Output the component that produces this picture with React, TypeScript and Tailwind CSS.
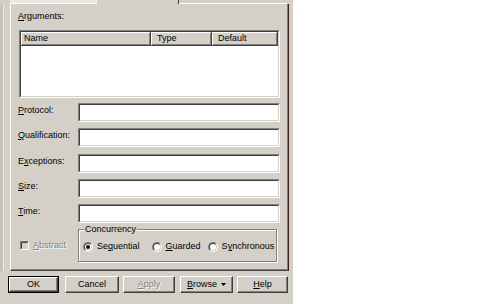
import type { ReactNode } from "react";

// sunken 3d frame (text fields, list, check box)
function Sunken({ className, inner, children }: { className: string; inner?: string; children?: ReactNode }) {
  return (
    <div className={`border border-t-[#808080] border-l-[#808080] border-r-white border-b-white ${className}`}>
      <div className={`h-full border border-t-[#404040] border-l-[#404040] border-r-[#d4d0c8] border-b-[#d4d0c8] ${inner ?? "bg-white"}`}>
        {children}
      </div>
    </div>
  );
}

function Radio({ on }: { on?: boolean }) {
  return (
    <div className="w-[10px] h-[10px] shrink-0 rounded-full border border-t-[#808080] border-l-[#808080] border-r-white border-b-white">
      <div className="w-full h-full rounded-full border border-t-[#404040] border-l-[#404040] border-r-[#d4d0c8] border-b-[#d4d0c8] bg-white flex items-center justify-center">
        {on && <div className="w-[4px] h-[4px] rounded-full bg-black" />}
      </div>
    </div>
  );
}

function Btn({ className, children, def }: { className: string; children: ReactNode; def?: boolean }) {
  const face =
    "h-full flex items-center justify-center border border-t-white border-l-white border-r-[#404040] border-b-[#404040] shadow-[inset_-1px_-1px_0_#808080]";
  if (def) {
    return (
      <div className={`h-[17px] border border-black ${className}`}>
        <div className={face}>{children}</div>
      </div>
    );
  }
  return (
    <div className={`h-[17px] ${className}`}>
      <div className={face}>{children}</div>
    </div>
  );
}

function Row({ className, children }: { className: string; children: ReactNode }) {
  return (
    <div className={`flex items-start h-[19px] ${className}`}>
      <div className="w-[60px] mt-[2px]">{children}</div>
      <Sunken className="w-[202px] h-[19px]" />
    </div>
  );
}

const U = ({ c }: { c: string }) => <span className="underline underline-offset-[1px]">{c}</span>;

export default function App() {
  return (
    <div className="w-[504px] h-[304px] bg-white flex font-['Liberation_Sans',Arial,sans-serif] text-[9px] leading-[11px] text-black">
      <div className="w-[293px] h-full bg-[#d4d0c8] flex flex-col">
        {/* cut-off tab strip */}
        <div className="flex h-[4px]">
          <div className="w-[10px]" />
          <div className="w-[87px] flex flex-col">
            <div className="h-[3px] bg-[#ebe9e4]" />
            <div className="h-[1px] bg-white" />
          </div>
          <div className="w-[82px] border-r border-r-[#404040]" />
          <div className="w-[108px] flex flex-col">
            <div className="h-[3px]" />
            <div className="h-[1px] bg-white" />
          </div>
        </div>

        <div className="flex h-[267px]">
          <div className="w-[10px] flex">
            <div className="w-[3px] bg-[#c6c3bc]" />
            <div className="w-[1px] bg-[#ebe9e4]" />
          </div>

          {/* tab page */}
          <div className="w-[279px] h-full pl-[7px] border-l border-l-white border-r border-r-[#3c1e1e] border-b border-b-[#404040] shadow-[inset_-1px_-1px_0_#808080]">
            <div className="mt-[7px] h-[11px]">
              <U c="A" />rguments:
            </div>

            <Sunken className="mt-[8px] ml-[1px] w-[261px] h-[68px]">
              <div className="flex h-[14px]">
                <div className="w-[130px] pl-[3px] flex items-center border-r border-b border-r-[#404040] border-b-[#404040] shadow-[inset_1px_1px_0_white,inset_-1px_-1px_0_#808080] bg-[#d4d0c8]">
                  Name
                </div>
                <div className="w-[61px] pl-[6px] flex items-center border-r border-b border-r-[#404040] border-b-[#404040] shadow-[inset_1px_1px_0_white,inset_-1px_-1px_0_#808080] bg-[#d4d0c8]">
                  Type
                </div>
                <div className="w-[66px] pl-[6px] flex items-center border-r border-b border-r-[#404040] border-b-[#404040] shadow-[inset_1px_1px_0_white,inset_-1px_-1px_0_#808080] bg-[#d4d0c8]">
                  Default
                </div>
              </div>
            </Sunken>

            <Row className="mt-[5px]">
              <U c="P" />rotocol:
            </Row>
            <Row className="mt-[6px]">
              <U c="Q" />ualification:
            </Row>
            <Row className="mt-[7px]">
              E<U c="x" />ceptions:
            </Row>
            <Row className="mt-[6px]">
              <U c="S" />ize:
            </Row>
            <Row className="mt-[6px]">
              <U c="T" />ime:
            </Row>

            <div className="flex items-start mt-[1px]">
              <div className="w-[60px] pt-[16px] flex items-center">
                <Sunken className="ml-[2px] w-[9px] h-[9px]" inner="bg-[#d4d0c8]" />
                <span className="ml-[4px] text-[#808080] [text-shadow:1px_1px_0_#fff]">
                  <U c="A" />bstract
                </span>
              </div>

              <fieldset className="w-[199px] h-[38px] border border-[#808080] shadow-[1px_1px_0_white,inset_1px_1px_0_white]">
                <legend className="ml-[5px] px-[1px] bg-[#d4d0c8] leading-[11px]">Concurrency</legend>
                <div className="flex items-center mt-[6px] pl-[4px]">
                  <Radio on />
                  <span className="ml-[4px]">
                    Se<U c="q" />uential
                  </span>
                  <div className="ml-[12px]">
                    <Radio />
                  </div>
                  <span className="ml-[4px]">
                    <U c="G" />uarded
                  </span>
                  <div className="ml-[7px]">
                    <Radio />
                  </div>
                  <span className="ml-[4px]">
                    S<U c="y" />nchronous
                  </span>
                </div>
              </fieldset>
            </div>
          </div>
        </div>

        {/* dialog buttons */}
        <div className="flex mt-[5px]">
          <Btn def className="ml-[8px] w-[51px]">OK</Btn>
          <Btn className="ml-[6px] w-[54px]">Cancel</Btn>
          <Btn className="ml-[4px] w-[52px]">
            <span className="text-[#808080] [text-shadow:1px_1px_0_#fff]">
              <U c="A" />pply
            </span>
          </Btn>
          <Btn className="ml-[5px] w-[53px]">
            <U c="B" />rowse
            <svg className="ml-[4px]" width="5" height="3" viewBox="0 0 5 3">
              <path d="M0 0h5L2.5 3z" fill="black" />
            </svg>
          </Btn>
          <Btn className="ml-[4px] w-[51px]">
            <U c="H" />elp
          </Btn>
        </div>
      </div>
    </div>
  );
}
